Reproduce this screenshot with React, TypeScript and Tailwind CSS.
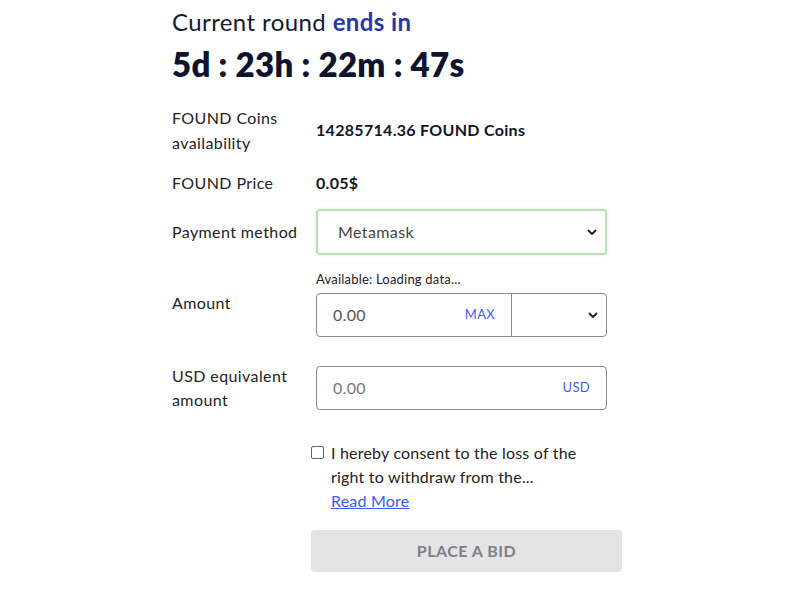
export default function App() {
  return (
    <div className="min-h-[600px] bg-white font-['Lato','Noto_Sans',sans-serif] text-[#1a1f36]">
      <div className="mx-auto w-[456px] pt-[6px]">
        <h1 className="text-[24px] leading-[32px] tracking-[0.4px] text-[#141a33]">
          Current round <span className="font-bold text-[#2438a8]">ends in</span>
        </h1>
        <div className="mt-[6px] text-[33px] font-extrabold leading-[40px] tracking-[0.3px] text-[#0e1330]">
          5d : 23h : 22m : 47s
        </div>

        <div className="mt-[21px] flex items-center">
          <div className="w-[144px] text-[16px] leading-[25px] tracking-[0.4px] text-[#222]">
            FOUND Coins
            <br />
            availability
          </div>
          <div className="text-[16px] font-bold tracking-[0.3px] text-[#111528]">14285714.36 FOUND Coins</div>
        </div>

        <div className="mt-[16px] flex items-center">
          <div className="w-[144px] text-[16px] leading-[24px] tracking-[0.4px] text-[#222]">FOUND Price</div>
          <div className="text-[16px] font-bold tracking-[0.3px] text-[#111528]">0.05$</div>
        </div>

        <div className="mt-[14px] flex items-center">
          <div className="w-[144px] text-[16px] tracking-[0.4px] text-[#222]">Payment method</div>
          <div className="flex h-[46px] w-[291px] items-center justify-between rounded-[4px] border-2 border-[#b8e0b4] pl-[20px] pr-[8px] shadow-[0_0_3px_#cfe9cc]">
            <span className="text-[16px] tracking-[0.4px] text-[#444]">Metamask</span>
            <Chevron />
          </div>
        </div>

        <div className="mt-[15px] flex">
          <div className="w-[144px] pt-[21px] text-[16px] tracking-[0.4px] text-[#222]">Amount</div>
          <div>
            <div className="text-[13px] leading-[18px] tracking-[0.2px] text-[#222]">Available: Loading data...</div>
            <div className="mt-[5px] flex h-[44px] w-[291px] rounded-[4px] border border-[#8a8a8a]">
              <div className="flex w-[195px] items-center justify-between border-r border-[#8a8a8a] pl-[16px] pr-[16px]">
                <span className="text-[16px] tracking-[0.3px] text-[#555]">0.00</span>
                <span className="text-[13px] tracking-[0.3px] text-[#3d5afe]">MAX</span>
              </div>
              <div className="flex flex-1 items-center justify-end pr-[8px]">
                <Chevron />
              </div>
            </div>
          </div>
        </div>

        <div className="mt-[27px] flex items-center">
          <div className="w-[144px] text-[16px] leading-[24px] tracking-[0.4px] text-[#222]">
            USD equivalent
            <br />
            amount
          </div>
          <div className="flex h-[44px] w-[291px] items-center justify-between rounded-[4px] border border-[#8a8a8a] pl-[16px] pr-[16px]">
            <span className="text-[16px] tracking-[0.3px] text-[#777]">0.00</span>
            <span className="text-[13px] tracking-[0.3px] text-[#3d5afe]">USD</span>
          </div>
        </div>

        <div className="ml-[139px] mt-[29px] flex gap-[7px]">
          <div className="mt-[5px] h-[13px] w-[13px] shrink-0 rounded-[2px] border border-[#666] bg-white" />
          <div className="text-[16px] leading-[24px] tracking-[0.2px] text-[#222]">
            I hereby consent to the loss of the
            <br />
            right to withdraw from the...
            <br />
            <span className="text-[#3d5afe] underline">Read More</span>
          </div>
        </div>

        <div className="ml-[139px] mt-[17px] flex h-[42px] w-[311px] items-center justify-center rounded-[4px] bg-[#e4e4e4] text-[16px] font-bold tracking-[0.5px] text-[#7c7f89]">
          PLACE A BID
        </div>
      </div>
    </div>
  )
}

function Chevron() {
  return (
    <svg width="10" height="7" viewBox="0 0 10 7" fill="none">
      <path d="M1.5 1.5 L5 5 L8.5 1.5" stroke="#222" strokeWidth="1.8" strokeLinecap="round" strokeLinejoin="round" />
    </svg>
  )
}
